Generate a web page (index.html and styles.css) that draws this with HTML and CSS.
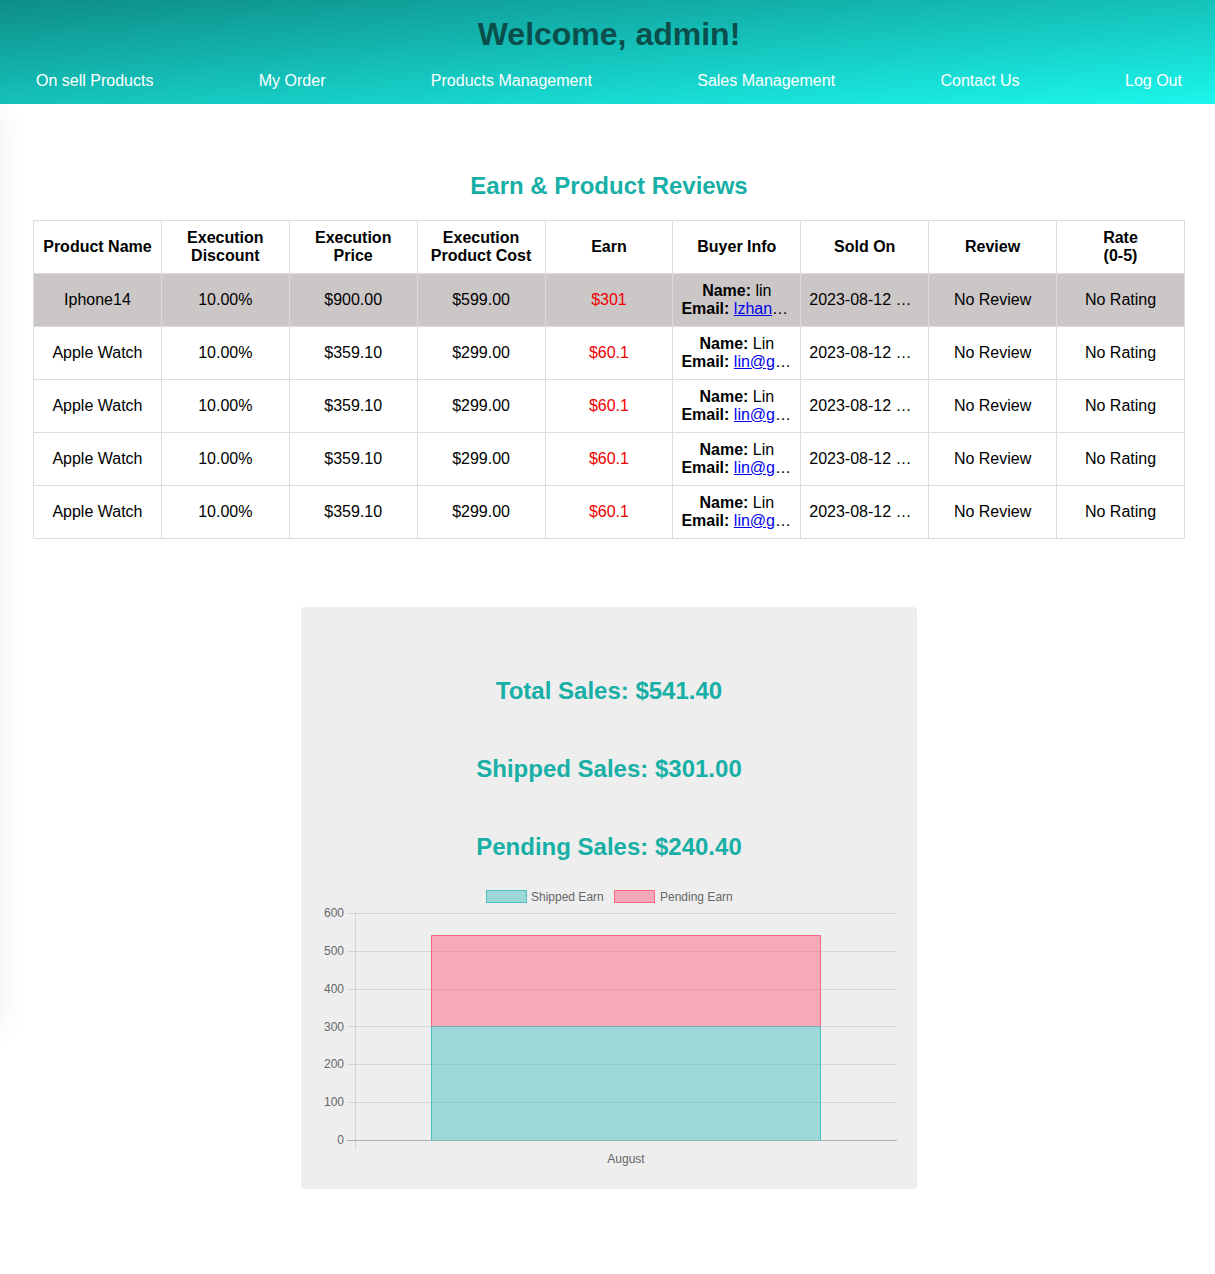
FILE: index.html
```html
<!DOCTYPE html>
<html lang="en">
<head>
<meta charset="utf-8">
<title>Earn &amp; Product Reviews</title>
<link rel="stylesheet" href="styles.css">
</head>
<body>
<aside class="sidebar" aria-hidden="true"></aside>
<header class="topbar">
  <h1 class="welcome">Welcome, admin!</h1>
  <nav class="nav">
    <a href="#">On sell Products</a>
    <a href="#">My Order</a>
    <a href="#">Products Management</a>
    <a href="#">Sales Management</a>
    <a href="#">Contact Us</a>
    <a href="#">Log Out</a>
  </nav>
</header>
<main class="main">
  <h2 class="section-title">Earn &amp; Product Reviews</h2>
  <table class="reviews">
    <thead>
      <tr>
        <th>Product Name</th>
        <th>Execution Discount</th>
        <th>Execution Price</th>
        <th>Execution Product Cost</th>
        <th>Earn</th>
        <th>Buyer Info</th>
        <th>Sold On</th>
        <th>Review</th>
        <th>Rate<br>(0-5)</th>
      </tr>
    </thead>
    <tbody>
      <tr class="active">
        <td>Iphone14</td>
        <td>10.00%</td>
        <td>$900.00</td>
        <td>$599.00</td>
        <td class="earn">$301</td>
        <td><div><b>Name:</b> lin</div><div class="clip"><b>Email:</b> <a href="#">lzhan</a>…</div></td>
        <td class="clip">2023-08-12 …</td>
        <td>No Review</td>
        <td>No Rating</td>
      </tr>
      <tr>
        <td>Apple Watch</td>
        <td>10.00%</td>
        <td>$359.10</td>
        <td>$299.00</td>
        <td class="earn">$60.1</td>
        <td><div><b>Name:</b> Lin</div><div class="clip"><b>Email:</b> <a href="#">lin@g</a>…</div></td>
        <td class="clip">2023-08-12 …</td>
        <td>No Review</td>
        <td>No Rating</td>
      </tr>
      <tr>
        <td>Apple Watch</td>
        <td>10.00%</td>
        <td>$359.10</td>
        <td>$299.00</td>
        <td class="earn">$60.1</td>
        <td><div><b>Name:</b> Lin</div><div class="clip"><b>Email:</b> <a href="#">lin@g</a>…</div></td>
        <td class="clip">2023-08-12 …</td>
        <td>No Review</td>
        <td>No Rating</td>
      </tr>
      <tr>
        <td>Apple Watch</td>
        <td>10.00%</td>
        <td>$359.10</td>
        <td>$299.00</td>
        <td class="earn">$60.1</td>
        <td><div><b>Name:</b> Lin</div><div class="clip"><b>Email:</b> <a href="#">lin@g</a>…</div></td>
        <td class="clip">2023-08-12 …</td>
        <td>No Review</td>
        <td>No Rating</td>
      </tr>
      <tr>
        <td>Apple Watch</td>
        <td>10.00%</td>
        <td>$359.10</td>
        <td>$299.00</td>
        <td class="earn">$60.1</td>
        <td><div><b>Name:</b> Lin</div><div class="clip"><b>Email:</b> <a href="#">lin@g</a>…</div></td>
        <td class="clip">2023-08-12 …</td>
        <td>No Review</td>
        <td>No Rating</td>
      </tr>
    </tbody>
  </table>

  <section class="sales-panel">
    <div class="totals">
      <h2 class="total">Total Sales: $541.40</h2>
      <h2 class="total">Shipped Sales: $301.00</h2>
      <h2 class="total">Pending Sales: $240.40</h2>
    </div>
    <svg class="chart" width="584" height="298" viewBox="0 0 584 298">
      <rect x="169.5" y="15.5" width="40" height="12" fill="rgba(75,192,192,0.5)" stroke="rgb(75,192,192)" stroke-width="1"/>
      <text x="214" y="25.5" class="chart-text">Shipped Earn</text>
      <rect x="297.5" y="15.5" width="40" height="12" fill="rgba(255,99,132,0.5)" stroke="rgb(255,99,132)" stroke-width="1"/>
      <text x="343" y="25.5" class="chart-text">Pending Earn</text>
      <g stroke="rgba(0,0,0,0.1)" stroke-width="1">
        <line x1="30" y1="38.5" x2="580" y2="38.5"/>
        <line x1="30" y1="76.5" x2="580" y2="76.5"/>
        <line x1="30" y1="114.5" x2="580" y2="114.5"/>
        <line x1="30" y1="151.5" x2="580" y2="151.5"/>
        <line x1="30" y1="189.5" x2="580" y2="189.5"/>
        <line x1="30" y1="227.5" x2="580" y2="227.5"/>
      </g>
      <line x1="30" y1="265.5" x2="580" y2="265.5" stroke="rgba(0,0,0,0.25)" stroke-width="1"/>
      <line x1="38.5" y1="38" x2="38.5" y2="274" stroke="rgba(0,0,0,0.1)" stroke-width="1"/>
      <g class="chart-text" text-anchor="end">
        <text x="27" y="42">600</text>
        <text x="27" y="80">500</text>
        <text x="27" y="118">400</text>
        <text x="27" y="155.5">300</text>
        <text x="27" y="193">200</text>
        <text x="27" y="231">100</text>
        <text x="27" y="269">0</text>
      </g>
      <rect x="114.5" y="151.5" width="389" height="114" fill="rgba(75,192,192,0.5)"/>
      <path d="M114.5 265.5 V151.5 H503.5 V265.5" fill="none" stroke="rgb(75,192,192)" stroke-width="1"/>
      <rect x="114.5" y="60.5" width="389" height="91" fill="rgba(255,99,132,0.5)"/>
      <path d="M114.5 151.5 V60.5 H503.5 V151.5" fill="none" stroke="rgb(255,99,132)" stroke-width="1"/>
      <text x="309" y="288" class="chart-text" text-anchor="middle">August</text>
    </svg>
  </section>
</main>
</body>
</html>
```

FILE: styles.css
```css
html, body {
  margin: 0;
  padding: 0;
  background: #ffffff;
}

body {
  font-family: "Liberation Sans", Arial, Helvetica, sans-serif;
  color: #000;
  min-height: 1274px;
}

.sidebar {
  position: fixed;
  left: -260px;
  top: 110px;
  width: 260px;
  height: 920px;
  background: #fff;
  box-shadow: 0 0 28px rgba(0, 0, 0, 0.07);
}

.topbar {
  background: linear-gradient(to bottom right, #0e8d88, #1bf6ec);
  padding: 16px 33px 14px 36px;
}

.welcome {
  margin: 0;
  text-align: center;
  font-size: 32px;
  line-height: 37px;
  font-weight: bold;
  color: #0b4e4b;
}

.nav {
  display: flex;
  justify-content: space-between;
  margin-top: 19px;
  line-height: 18px;
}

.nav a {
  color: #ffffff;
  text-decoration: none;
  font-size: 16px;
}

.main {
  width: 1152px;
  padding: 0 30px 80px 33px;
}

.section-title {
  margin: 68px 0 20px;
  text-align: center;
  font-size: 24px;
  line-height: 28px;
  font-weight: bold;
  color: #17afa6;
}

.reviews {
  width: 1152px;
  border-collapse: collapse;
  table-layout: fixed;
  font-size: 16px;
  line-height: 18px;
}

.reviews th,
.reviews td {
  border: 1px solid #dcdcdc;
  padding: 8px;
  text-align: center;
  vertical-align: middle;
}

.reviews th {
  font-weight: bold;
}

.reviews td {
  white-space: nowrap;
  overflow: hidden;
}

.reviews .clip {
  text-align: left;
}

.reviews tr.active td {
  background: #ccc7c7;
}

.reviews td.earn {
  color: #ee0000;
}

.reviews a {
  color: #0000ee;
  text-decoration: underline;
}

.sales-panel {
  width: 584px;
  margin: 68px auto 0;
  padding: 70px 16px 16px;
  background: #eeeeee;
  border-radius: 4px;
}

.totals {
  display: flex;
  flex-direction: column;
  gap: 50px;
}

.total {
  margin: 0;
  text-align: center;
  font-size: 24px;
  line-height: 28px;
  font-weight: bold;
  color: #17afa6;
}

.chart {
  display: block;
  margin-top: 14px;
}

.chart-text {
  font-family: "Liberation Sans", Arial, Helvetica, sans-serif;
  font-size: 12px;
  fill: #666666;
}
```
